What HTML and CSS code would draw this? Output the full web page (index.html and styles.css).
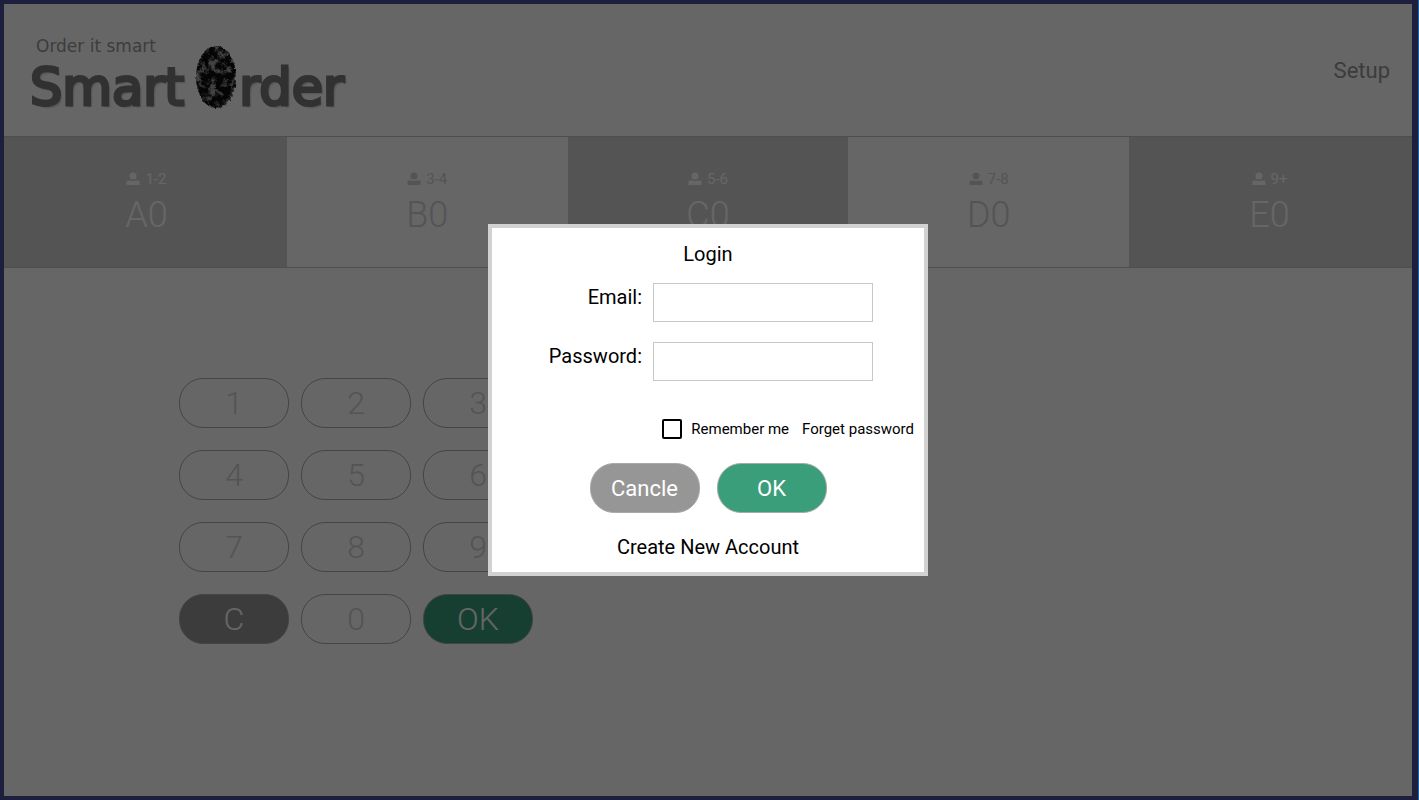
FILE: index.html
```html
<!DOCTYPE html>
<html lang="en">
<head>
    <meta charset="UTF-8">
    <meta name="viewport" content="width=device-width, initial-scale=1.0">
    <title>Smart Order</title>
    <link rel="stylesheet" href="styles.css">
</head>
<body>

    <svg class="symbols" aria-hidden="true">
        <symbol id="person" viewBox="0 0 14 13">
            <circle cx="7" cy="4" r="3.5"/>
            <path d="M0.5 13V9.6Q0.5 8.4 2 8.4H4.5Q7 9.6 9.5 8.4H12Q13.5 8.4 13.5 9.6V13Z"/>
        </symbol>
    </svg>

    <div class="screen">
        <header class="header">
            <div class="logo">
                <span class="tagline">Order it smart</span>
                <span class="word">Smart</span>
                <svg class="fingerprint" viewBox="0 0 42 64" role="img" aria-label="O">
                    <defs>
                        <filter id="grain" x="0" y="0" width="1" height="1">
                            <feTurbulence type="fractalNoise" baseFrequency="0.14" numOctaves="4" seed="21"/>
                            <feColorMatrix values="0 0 0 0 0.38  0 0 0 0 0.38  0 0 0 0 0.38  4 0 0 0 -1.8"/>
                            <feComposite in2="SourceGraphic" operator="in"/>
                        </filter>
                        <filter id="rough" x="-0.1" y="-0.1" width="1.2" height="1.2">
                            <feTurbulence type="fractalNoise" baseFrequency="0.4" numOctaves="1" seed="3"/>
                            <feDisplacementMap in="SourceGraphic" scale="4" xChannelSelector="R" yChannelSelector="G"/>
                        </filter>
                    </defs>
                    <g filter="url(#rough)">
                        <ellipse cx="21" cy="32" rx="20" ry="31" fill="#0c0c0c"/>
                        <ellipse cx="21" cy="32" rx="20" ry="31" filter="url(#grain)"/>
                    </g>
                </svg>
                <span class="word word-end">rder</span>
            </div>
            <a class="setup" href="#">Setup</a>
        </header>

        <div class="tables">
            <div class="table-type filled">
                <div class="people"><svg><use href="#person"/></svg>1-2</div>
                <div class="number">A0</div>
            </div>
            <div class="table-type">
                <div class="people"><svg><use href="#person"/></svg>3-4</div>
                <div class="number">B0</div>
            </div>
            <div class="table-type filled">
                <div class="people"><svg><use href="#person"/></svg>5-6</div>
                <div class="number">C0</div>
            </div>
            <div class="table-type">
                <div class="people"><svg><use href="#person"/></svg>7-8</div>
                <div class="number">D0</div>
            </div>
            <div class="table-type filled">
                <div class="people"><svg><use href="#person"/></svg>9+</div>
                <div class="number">E0</div>
            </div>
        </div>

        <main class="main">
            <div class="keypad">
                <button type="button" class="key">1</button>
                <button type="button" class="key">2</button>
                <button type="button" class="key">3</button>
                <button type="button" class="key">4</button>
                <button type="button" class="key">5</button>
                <button type="button" class="key">6</button>
                <button type="button" class="key">7</button>
                <button type="button" class="key">8</button>
                <button type="button" class="key">9</button>
                <button type="button" class="key gray">C</button>
                <button type="button" class="key">0</button>
                <button type="button" class="key green">OK</button>
            </div>
        </main>

        <div class="overlay">
            <form class="login" role="dialog" aria-labelledby="login-title">
                <h1 id="login-title">Login</h1>

                <div class="field">
                    <label for="email">Email:</label>
                    <input type="email" id="email">
                </div>
                <div class="field">
                    <label for="password">Password:</label>
                    <input type="password" id="password">
                </div>

                <div class="options">
                    <input type="checkbox" id="remember">
                    <label for="remember">Remember me</label>
                    <a href="#">Forget password</a>
                </div>

                <div class="actions">
                    <button type="button" class="key gray">Cancle</button>
                    <button type="submit" class="key green">OK</button>
                </div>

                <a class="create" href="#">Create New Account</a>
            </form>
        </div>
    </div>

</body>
</html>
```
FILE: styles.css
```css
* {
    box-sizing: border-box;
}

body {
    margin: 0;
    font-family: Roboto, sans-serif;
    background-color: #1f5fb0;
    padding-right: 1px;
}

a {
    color: inherit;
    text-decoration: none;
}

.symbols {
    display: none;
}

.screen {
    position: relative;
    display: flex;
    flex-direction: column;
    min-height: 100vh;
    border: 4px solid #1e1f3d;
    border-right-width: 6px;
    background-color: white;
}

.header {
    display: flex;
    justify-content: space-between;
    align-items: center;
    height: 132px;
    padding: 0 22px 0 26px;
}

.logo {
    display: grid;
    grid-template-columns: auto auto auto;
    grid-template-rows: 28px 48px;
    font-family: "DejaVu Sans", sans-serif;
    margin-top: 8px;
}

.tagline {
    grid-column: 1;
    padding-left: 6px;
    font-size: 17px;
    line-height: 20px;
    color: #989898;
}

.word {
    grid-column: 1;
    grid-row: 2;
    font-size: 51px;
    line-height: 48px;
    color: #7c7c7c;
    -webkit-text-stroke: 3px #7c7c7c;
    text-shadow: 2px 2px 2px #bbb;
}

.word-end {
    grid-column: 3;
}

.fingerprint {
    grid-column: 2;
    grid-row: 1 / 3;
    width: 42px;
    height: 64px;
    margin: 9px 2px 0 11px;
}

.setup {
    font-size: 22px;
    color: #969696;
}

.tables {
    display: flex;
    height: 132px;
    padding: 0 2px;
    border-top: 1px solid #c4c4c4;
    border-bottom: 1px solid #c4c4c4;
    background-color: #d2d2d2;
}

.table-type {
    flex: 1;
    display: flex;
    flex-direction: column;
    align-items: center;
    padding-top: 32px;
    background-color: white;
    color: #d2d2d2;
}

.table-type.filled {
    background-color: #d2d2d2;
    color: white;
}

.people {
    display: flex;
    align-items: center;
    gap: 5px;
    font-size: 15px;
    line-height: 20px;
}

.people svg {
    width: 14px;
    height: 13px;
    margin-bottom: 2px;
    fill: currentColor;
}

.number {
    font-size: 36px;
    line-height: 52px;
    font-weight: 300;
}

.main {
    display: grid;
    grid-template-columns: 1fr 1fr;
    padding-top: 110px;
}

.keypad {
    display: grid;
    grid-template-columns: 110px 110px 110px;
    justify-content: center;
    gap: 22px 12px;
}

.key {
    width: 110px;
    height: 50px;
    padding: 0;
    border: 1px solid #aaa;
    border-radius: 24px;
    background-color: white;
    color: #d2d2d2;
    font-family: inherit;
    font-size: 32px;
    font-weight: 300;
    cursor: pointer;
}

.key.gray {
    background-color: #969696;
    color: white;
}

.key.green {
    background-color: #3a9e7a;
    color: white;
}

.overlay {
    position: absolute;
    inset: 0;
    display: flex;
    justify-content: center;
    align-items: center;
    background-color: rgba(0, 0, 0, 0.6);
}

.login {
    width: 440px;
    padding: 14px 10px 13px;
    border: 4px solid #d2d2d2;
    background-color: white;
    color: black;
    font-size: 20px;
}

.login h1 {
    margin: 0 0 17px;
    font-size: 20px;
    line-height: 24px;
    font-weight: 400;
    text-align: center;
}

.field {
    display: flex;
    gap: 11px;
    margin-bottom: 20px;
}

.field label {
    width: 140px;
    line-height: 28px;
    text-align: right;
}

.field input {
    width: 220px;
    height: 39px;
    padding: 0 8px;
    border: 1px solid #c8c8c8;
    background-color: white;
    font: inherit;
}

.options {
    display: flex;
    justify-content: flex-end;
    align-items: center;
    height: 20px;
    margin-top: 38px;
    font-size: 15px;
}

.options input {
    appearance: none;
    width: 20px;
    height: 20px;
    margin: 0 9px 0 0;
    border: 2px solid black;
    border-radius: 2px;
}

.options a {
    margin-left: 13px;
}

.actions {
    display: flex;
    justify-content: center;
    gap: 17px;
    margin: 24px 0 22px;
}

.actions .key {
    font-size: 22px;
    font-weight: 400;
}

.create {
    display: block;
    line-height: 24px;
    text-align: center;
}
```
